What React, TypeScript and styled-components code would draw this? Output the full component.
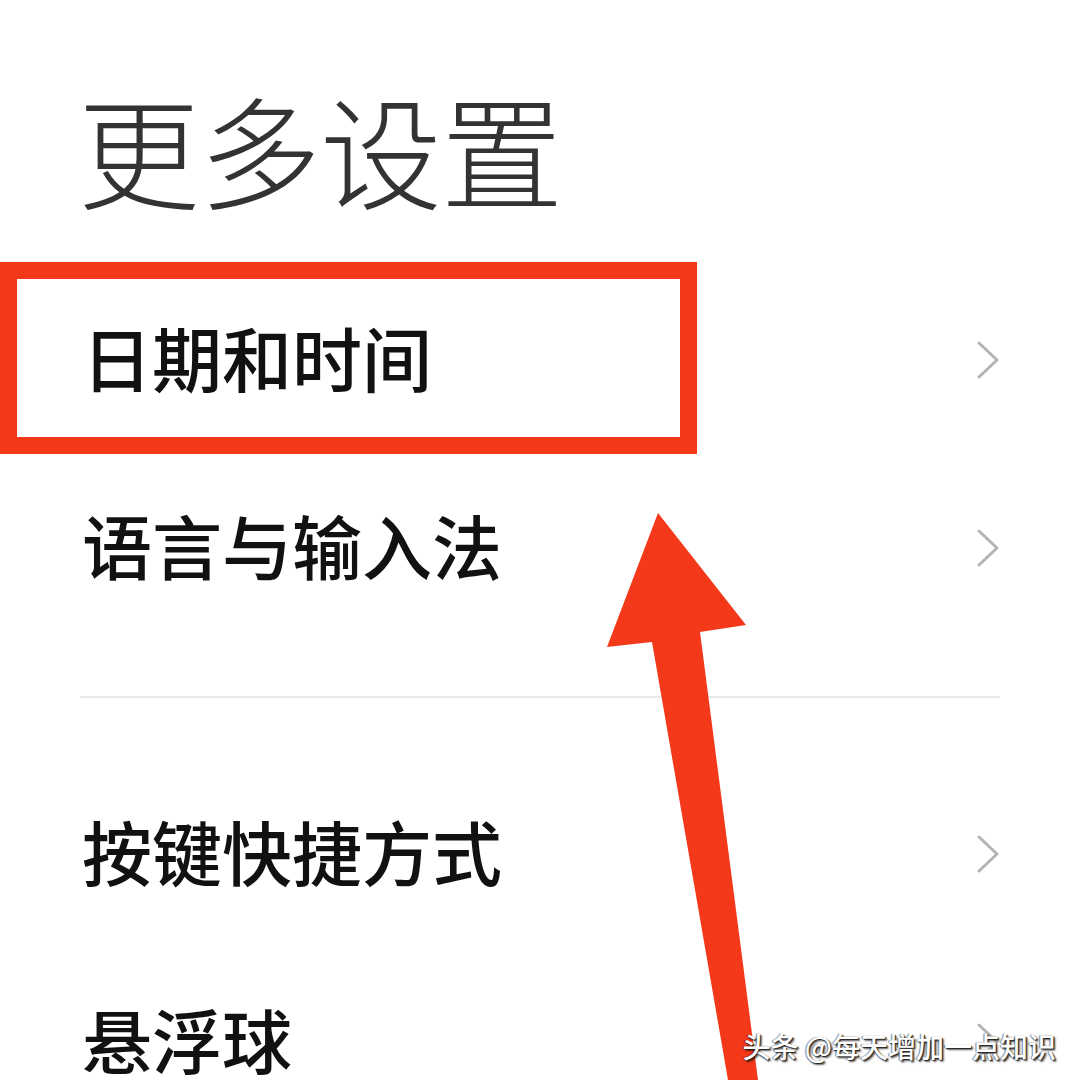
import React from "react";
import styled, { createGlobalStyle } from "styled-components";

const GlobalStyle = createGlobalStyle`
  html, body {
    margin: 0;
    padding: 0;
    background: #ffffff;
  }
  body {
    font-family: "Noto Sans CJK SC", "Noto Sans", sans-serif;
  }
`;

const Page = styled.div`
  position: relative;
  width: 1080px;
  height: 1080px;
  overflow: hidden;
  background: #ffffff;
`;

const Header = styled.header`
  padding: 86px 0 58px 78px;
`;

const Title = styled.h1`
  margin: 0;
  font-size: 122px;
  line-height: 122px;
  font-weight: 300;
  color: #333333;
  letter-spacing: -1px;
`;

const List = styled.div`
  display: flex;
  flex-direction: column;
`;

const Row = styled.div`
  display: flex;
  align-items: center;
  justify-content: space-between;
  height: 188px;
  padding: 0 80px 0 82px;
`;

const Label = styled.span`
  font-size: 70px;
  line-height: 1;
  font-weight: 500;
  color: #111111;
  position: relative;
  top: -3px;
`;

const Divider = styled.div`
  height: 2px;
  margin: 54px 80px 62px 80px;
  background: #e8e8e8;
`;

const Chevron = styled.svg`
  width: 24px;
  height: 38px;
  flex: none;
`;

const Highlight = styled.div`
  position: absolute;
  left: 0;
  top: 262px;
  width: 697px;
  height: 192px;
  box-sizing: border-box;
  border: 17px solid #f4391a;
  pointer-events: none;
`;

const ArrowLayer = styled.svg`
  position: absolute;
  left: 0;
  top: 0;
  width: 1080px;
  height: 1080px;
  pointer-events: none;
`;

const Watermark = styled.div`
  position: absolute;
  right: 24px;
  bottom: 20px;
  font-family: "Noto Sans CJK SC", "Noto Sans", sans-serif;
  font-size: 28px;
  line-height: 1;
  font-weight: 500;
  color: #ffffff;
  text-shadow: 1px 1px 1px #222, -1px 0 1px rgba(0,0,0,0.5), 2px 2px 2px rgba(0,0,0,0.6);
  white-space: nowrap;
`;

const ChevronIcon = () => (
  <Chevron viewBox="0 0 24 38">
    <polyline
      points="3,2 21,19 3,36"
      fill="none"
      stroke="#b4b4b4"
      strokeWidth="3"
      strokeLinecap="round"
      strokeLinejoin="round"
    />
  </Chevron>
);

const groupA = ["日期和时间", "语言与输入法"];
const groupB = ["按键快捷方式", "悬浮球"];

export default function App() {
  return (
    <Page>
      <GlobalStyle />
      <Header>
        <Title>更多设置</Title>
      </Header>
      <List>
        {groupA.map((t) => (
          <Row key={t}>
            <Label>{t}</Label>
            <ChevronIcon />
          </Row>
        ))}
        <Divider />
        {groupB.map((t) => (
          <Row key={t}>
            <Label>{t}</Label>
            <ChevronIcon />
          </Row>
        ))}
      </List>
      <Highlight />
      <ArrowLayer viewBox="0 0 1080 1080">
        <polygon
          points="658,513 746,625 700,632 758,1080 728,1080 652,642 607,647"
          fill="#f4391a"
        />
      </ArrowLayer>
      <Watermark>头条 @每天增加一点知识</Watermark>
    </Page>
  );
}
